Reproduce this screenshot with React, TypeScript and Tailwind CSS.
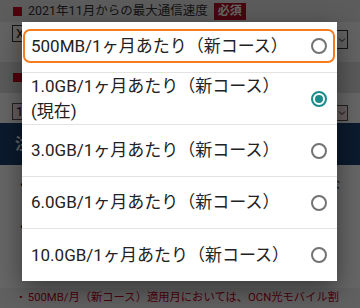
import React from 'react';

const jp = { fontFamily: 'Roboto, "Noto Sans CJK JP", sans-serif' };

const plans = [
  { label: '500MB/1ヶ月あたり（新コース）', focused: true },
  { label: '1.0GB/1ヶ月あたり（新コース）', sub: '(現在)', checked: true },
  { label: '3.0GB/1ヶ月あたり（新コース）' },
  { label: '6.0GB/1ヶ月あたり（新コース）' },
  { label: '10.0GB/1ヶ月あたり（新コース）' },
];

const Radio = ({ checked }: { checked?: boolean }) => (
  <svg width="18" height="18" viewBox="0 0 18 18" className="shrink-0">
    <circle cx="9" cy="9" r="7" fill="none" stroke={checked ? '#1a8c8c' : '#737373'} strokeWidth="2" />
    {checked && <circle cx="9" cy="9" r="4" fill="#1a8c8c" />}
  </svg>
);

const Chevron = () => (
  <svg width="8" height="6" viewBox="0 0 8 6">
    <path d="M1 1.5 L4 4.5 L7 1.5" fill="none" stroke="#222" strokeWidth="1" />
  </svg>
);

const App = () => {
  return (
    <div className="relative w-[360px] h-[308px] overflow-hidden bg-white" style={jp}>
      {/* Page behind the dialog */}
      <div className="flex flex-col">
        <div className="h-[22px] bg-[#e6e6e6] flex items-center pl-[13px]">
          <span className="w-[9px] h-[9px] bg-[#cc0022]" />
          <span className="ml-[6px] text-[12.5px] text-[#333]">2021年11月からの最大通信速度</span>
          <span className="ml-[6px] px-[4px] h-[17px] flex items-center bg-[#b3102a] text-white text-[12px] font-bold">必須</span>
        </div>
        <div className="h-[40px] bg-[#f7f7f7] flex justify-between px-[12px]">
          <div className="mt-[3px] h-[17px] px-[3px] border border-[#333] text-[13px] leading-[15px] text-[#111]">X</div>
          <div className="mt-[8px] h-[19px] w-[12px] border border-[#333] flex items-center justify-center">
            <Chevron />
          </div>
        </div>
        <div className="h-[31px] bg-[#e0e0e0] pl-[13px] pt-[11px]">
          <span className="block w-[9px] h-[9px] bg-[#cc0022]" />
        </div>
        <div className="h-[30px] bg-white flex justify-between px-[12px]">
          <div className="mt-[10px] h-[17px] px-[3px] border border-[#555] bg-[#ffe9ec] text-[13px] leading-[15px] text-[#111]">1</div>
          <div className="mt-[12px] h-[16px] w-[12px] border border-[#555] bg-[#ffe9ec] flex items-center justify-center">
            <Chevron />
          </div>
        </div>
        <div className="h-[42px] bg-[#1c4372] flex items-center pl-[15px] text-white text-[15px] font-bold">注意事項</div>
        <div className="h-[123px] bg-white pl-[20px] pr-[14px] pt-[10px] text-[12px] leading-[21px] text-[#222]">
          <div className="flex gap-[6px]">
            <span>•</span>
            <span>ご利用のデータ容量により、翌月の料金コースが変更となります。</span>
          </div>
          <div className="flex gap-[6px]">
            <span>•</span>
            <span>コースの変更は毎月末に受付を締め切り、翌月1日から適用されます。ご注意ください。とくに変更がある</span>
          </div>
        </div>
        <div className="h-[20px] bg-[#f2f2f2] flex items-center pl-[19px] text-[11.3px] text-[#c4001e] whitespace-nowrap">
          <span className="mr-[5px]">•</span>
          <span>500MB/月（新コース）適用月においては、OCN光モバイル割</span>
        </div>
      </div>

      {/* Dim overlay + dialog */}
      <div className="absolute inset-0 bg-black/60 pl-[22px] pt-[22px]">
        <div className="w-[315px] bg-white shadow-[0_8px_24px_rgba(0,0,0,0.45)] flex flex-col">
          {plans.map((p, i) => (
            <div
              key={i}
              className={`flex items-center ${i === 0 ? 'h-[51px]' : 'h-[52px]'} ${
                i < plans.length - 1 ? 'border-b border-[#e3e3e3]' : ''
              }`}
            >
              <div
                className={`flex-1 flex items-center justify-between ${
                  p.focused
                    ? 'ml-[1px] mr-[2px] h-[34px] -mt-[2px] border-2 border-[#f57c1f] rounded-[7px] pl-[6px] pr-[5px]'
                    : 'pl-[9px] pr-[9px]'
                }`}
              >
                <div className="text-[17px] leading-[25px] text-[#222]">
                  <div>{p.label}</div>
                  {p.sub && <div>{p.sub}</div>}
                </div>
                <Radio checked={p.checked} />
              </div>
            </div>
          ))}
        </div>
      </div>
    </div>
  );
};

export default App;
